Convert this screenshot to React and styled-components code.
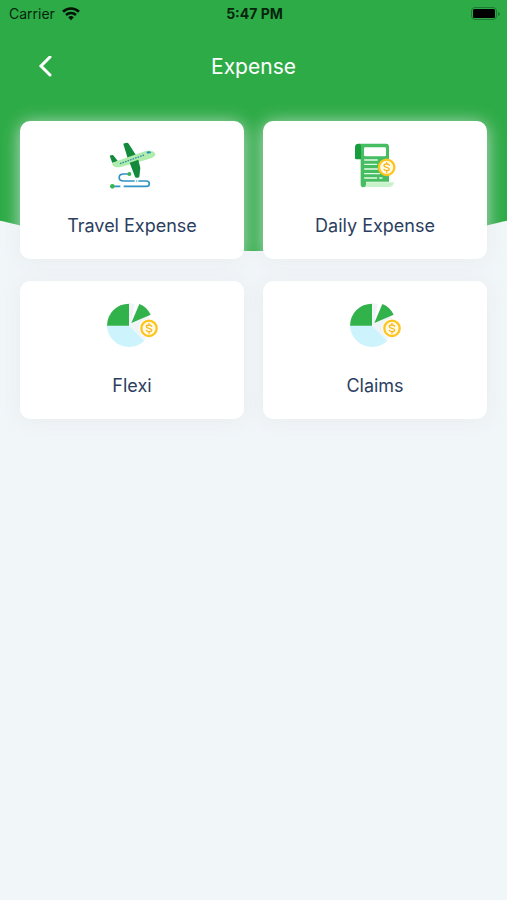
import styled, { createGlobalStyle } from "styled-components";

const GlobalStyle = createGlobalStyle`
  *{
    box-sizing: border-box;
  }
  body{
    margin: 0;
    background-color: #f1f6f9;
    font-family: Inter, "Liberation Sans", sans-serif;
  }
`;

const Screen = styled.div`
  display: grid;
  grid-template-columns: minmax(0, 1fr);
  align-items: start;
  min-height: 100vh;
  background-color: #f1f6f9;
`;
const Backdrop = styled.div`
  grid-area: 1 / 1;
  height: 251px;
  background-color: #2dab46;
  clip-path: ellipse(105% 100% at 50% 0);
`;
const Content = styled.div`
  grid-area: 1 / 1;
  display: flex;
  flex-direction: column;
  z-index: 1;
`;
const StatusBar = styled.div`
  display: grid;
  grid-template-columns: 1fr auto 1fr;
  align-items: center;
  height: 28px;
  padding: 0 7px 0 9px;
  font-size: 14px;
  line-height: 20px;
  color: #06240d;
`;
const Carrier = styled.span`
  display: flex;
  align-items: center;
  gap: 7px;
`;
const Time = styled.time`
  font-weight: 700;
`;
const Battery = styled.svg`
  justify-self: end;
`;
const Header = styled.header`
  display: grid;
  grid-template-columns: 42px 1fr 42px;
  align-items: center;
  height: 78px;
  padding: 0 24px;
`;
const BackButton = styled.button`
  display: flex;
  align-items: center;
  justify-content: center;
  height: 40px;
  padding: 0;
  border: none;
  background: none;
  color: #fff;
  cursor: pointer;
`;
const Title = styled.h1`
  margin: 0;
  font-size: 21px;
  font-weight: 400;
  line-height: 28px;
  text-align: center;
  color: #fff;
`;
const Cards = styled.main`
  display: grid;
  grid-template-columns: 1fr 1fr;
  gap: 22px 19px;
  padding: 15px 20px 20px;
`;
const Card = styled.button`
  display: flex;
  flex-direction: column;
  align-items: center;
  gap: 24px;
  padding: 19px 12px 21px;
  border: none;
  border-radius: 10px;
  background-color: #fff;
  box-shadow: 0 2px 18px rgba(230, 234, 235, 0.8);
  font-family: inherit;
  font-size: 18px;
  line-height: 24px;
  color: #2c3e60;
  cursor: pointer;
`;

const Icon = ({ children }) => (
  <svg width="52" height="50" viewBox="27 24 156 150" fill="none" aria-hidden="true">
    {children}
  </svg>
);

const Coin = ({ x, y }) => (
  <g transform={`translate(${x} ${y})`}>
    <circle r="23" fill="#fffbe8" stroke="#fcc520" strokeWidth="7" />
    <path
      d="M8 -6C7 -9 4 -10 0 -10C-5 -10 -8 -8 -8 -5C-8 -1 -4 -1 0 0C4 1 8 2 8 5C8 9 4 10 0 10C-4 10 -7 9 -8 6M0 -15V-10M0 10V15"
      stroke="#fbb81c"
      strokeWidth="4"
      strokeLinecap="round"
    />
  </g>
);

const TravelIcon = () => (
  <Icon>
    <path d="M99 126H80C62 126 62 147 80 147H113M124 147H148C160 147 160 163 148 163H80M70 163H46" stroke="#2f93c4" strokeWidth="5" />
    <circle cx="119" cy="147" r="2" fill="#2f93c4" />
    <circle cx="97" cy="126" r="6" fill="#36b552" />
    <circle cx="46" cy="163" r="7" fill="#36b552" />
    <path d="M79 36Q80 34 83 34L90 32Q93 32 95 35L117 70L92 79Z" fill="#13893c" />
    <path d="M38 71L45 69Q48 68 50 71L63 88L46 93Z" fill="#13893c" />
    <path d="M46 92L137 60C151 53 173 55 175 66C176 74 165 78 155 81L75 104C61 108 50 105 46 98Z" fill="#b0ecac" />
    <path d="M69 95L141 69" stroke="#2b91a9" strokeWidth="4" strokeDasharray="5 3" />
    <path d="M148 60L157 57L163 62L152 65Z" fill="#238fc2" />
    <path d="M98 92L124 83L130 108L127 134Q126 137 122 137L118 137Q115 137 114 134Z" fill="#13893c" />
  </Icon>
);

const DailyIcon = () => (
  <Icon>
    <path d="M74 151H162C160 160 156 165 148 165H70Z" fill="#c8f3ca" />
    <path d="M56 35H139Q147 35 147 45V149H78V157Q77 166 69 166Q62 166 62 157V82L52 42Z" fill="#45bd60" />
    <path d="M56 35Q63 35 63 45V82H49Q45 82 45 78V45Q45 35 56 35Z" fill="#189d3c" />
    <rect x="72" y="46" width="66" height="27" rx="4" fill="#fff" />
    <path d="M74 84H112M74 97H110M74 111H112M74 125H118M74 138H110M119 138H126" stroke="#e3fae6" strokeWidth="4" strokeLinecap="round" />
    <Coin x={140} y={106} />
  </Icon>
);

const PieIcon = () => (
  <Icon>
    <path d="M97 34Q106 34 113 37L104 84L149 62L164 100L141 144L97 101Z" fill="#eff4f7" />
    <path d="M30 101H96L142 146A66 66 0 0 1 30 101Z" fill="#cdf3fc" />
    <path d="M96 101H30A66 66 0 0 1 96 35Z" fill="#32b24b" />
    <path d="M103 93L127 36A62 62 0 0 1 161 68Z" fill="#32b24b" />
    <circle cx="156" cy="109" r="29" fill="#fff" />
    <Coin x={156} y={109} />
  </Icon>
);

const expenses = [
  { label: "Travel Expense", Picture: TravelIcon },
  { label: "Daily Expense", Picture: DailyIcon },
  { label: "Flexi", Picture: PieIcon },
  { label: "Claims", Picture: PieIcon },
];

const App = () => {
  return <>
    <GlobalStyle />
    <Screen>
      <Backdrop />
      <Content>
        <StatusBar>
          <Carrier>
            Carrier
            <svg width="18" height="14" viewBox="0 0 18 14" fill="none" stroke="#021206" aria-hidden="true">
              <path d="M1 4.8C5.5 .4 12.5 .4 17 4.8" strokeWidth="2.6" />
              <path d="M4 8C6.8 5.2 11.2 5.2 14 8" strokeWidth="2.5" />
              <path d="M6.2 10.2Q9 7.8 11.8 10.2L9 13.2Z" fill="#021206" stroke="none" />
            </svg>
          </Carrier>
          <Time>5:47 PM</Time>
          <Battery width="30" height="14" viewBox="0 0 30 14" aria-hidden="true">
            <rect x="1.5" y=".5" width="25" height="12" rx="3.5" fill="none" stroke="#1d7c31" />
            <rect x="3" y="2" width="22" height="9" rx="1.5" fill="#000" />
            <path d="M28 5Q30 5.500 30 7Q30 8.500 28 9Z" fill="#1d7c31" />
          </Battery>
        </StatusBar>
        <Header>
          <BackButton aria-label="Back">
            <svg width="14" height="22" viewBox="0 0 14 22" fill="none" aria-hidden="true">
              <path d="M12 1L3 10L12 19" stroke="currentColor" strokeWidth="3" strokeLinecap="round" />
            </svg>
          </BackButton>
          <Title>Expense</Title>
        </Header>
        <Cards>
          {expenses.map(({ label, Picture }) => (
            <Card key={label}>
              <Picture />
              {label}
            </Card>
          ))}
        </Cards>
      </Content>
    </Screen>
  </>;
}

export default App;
